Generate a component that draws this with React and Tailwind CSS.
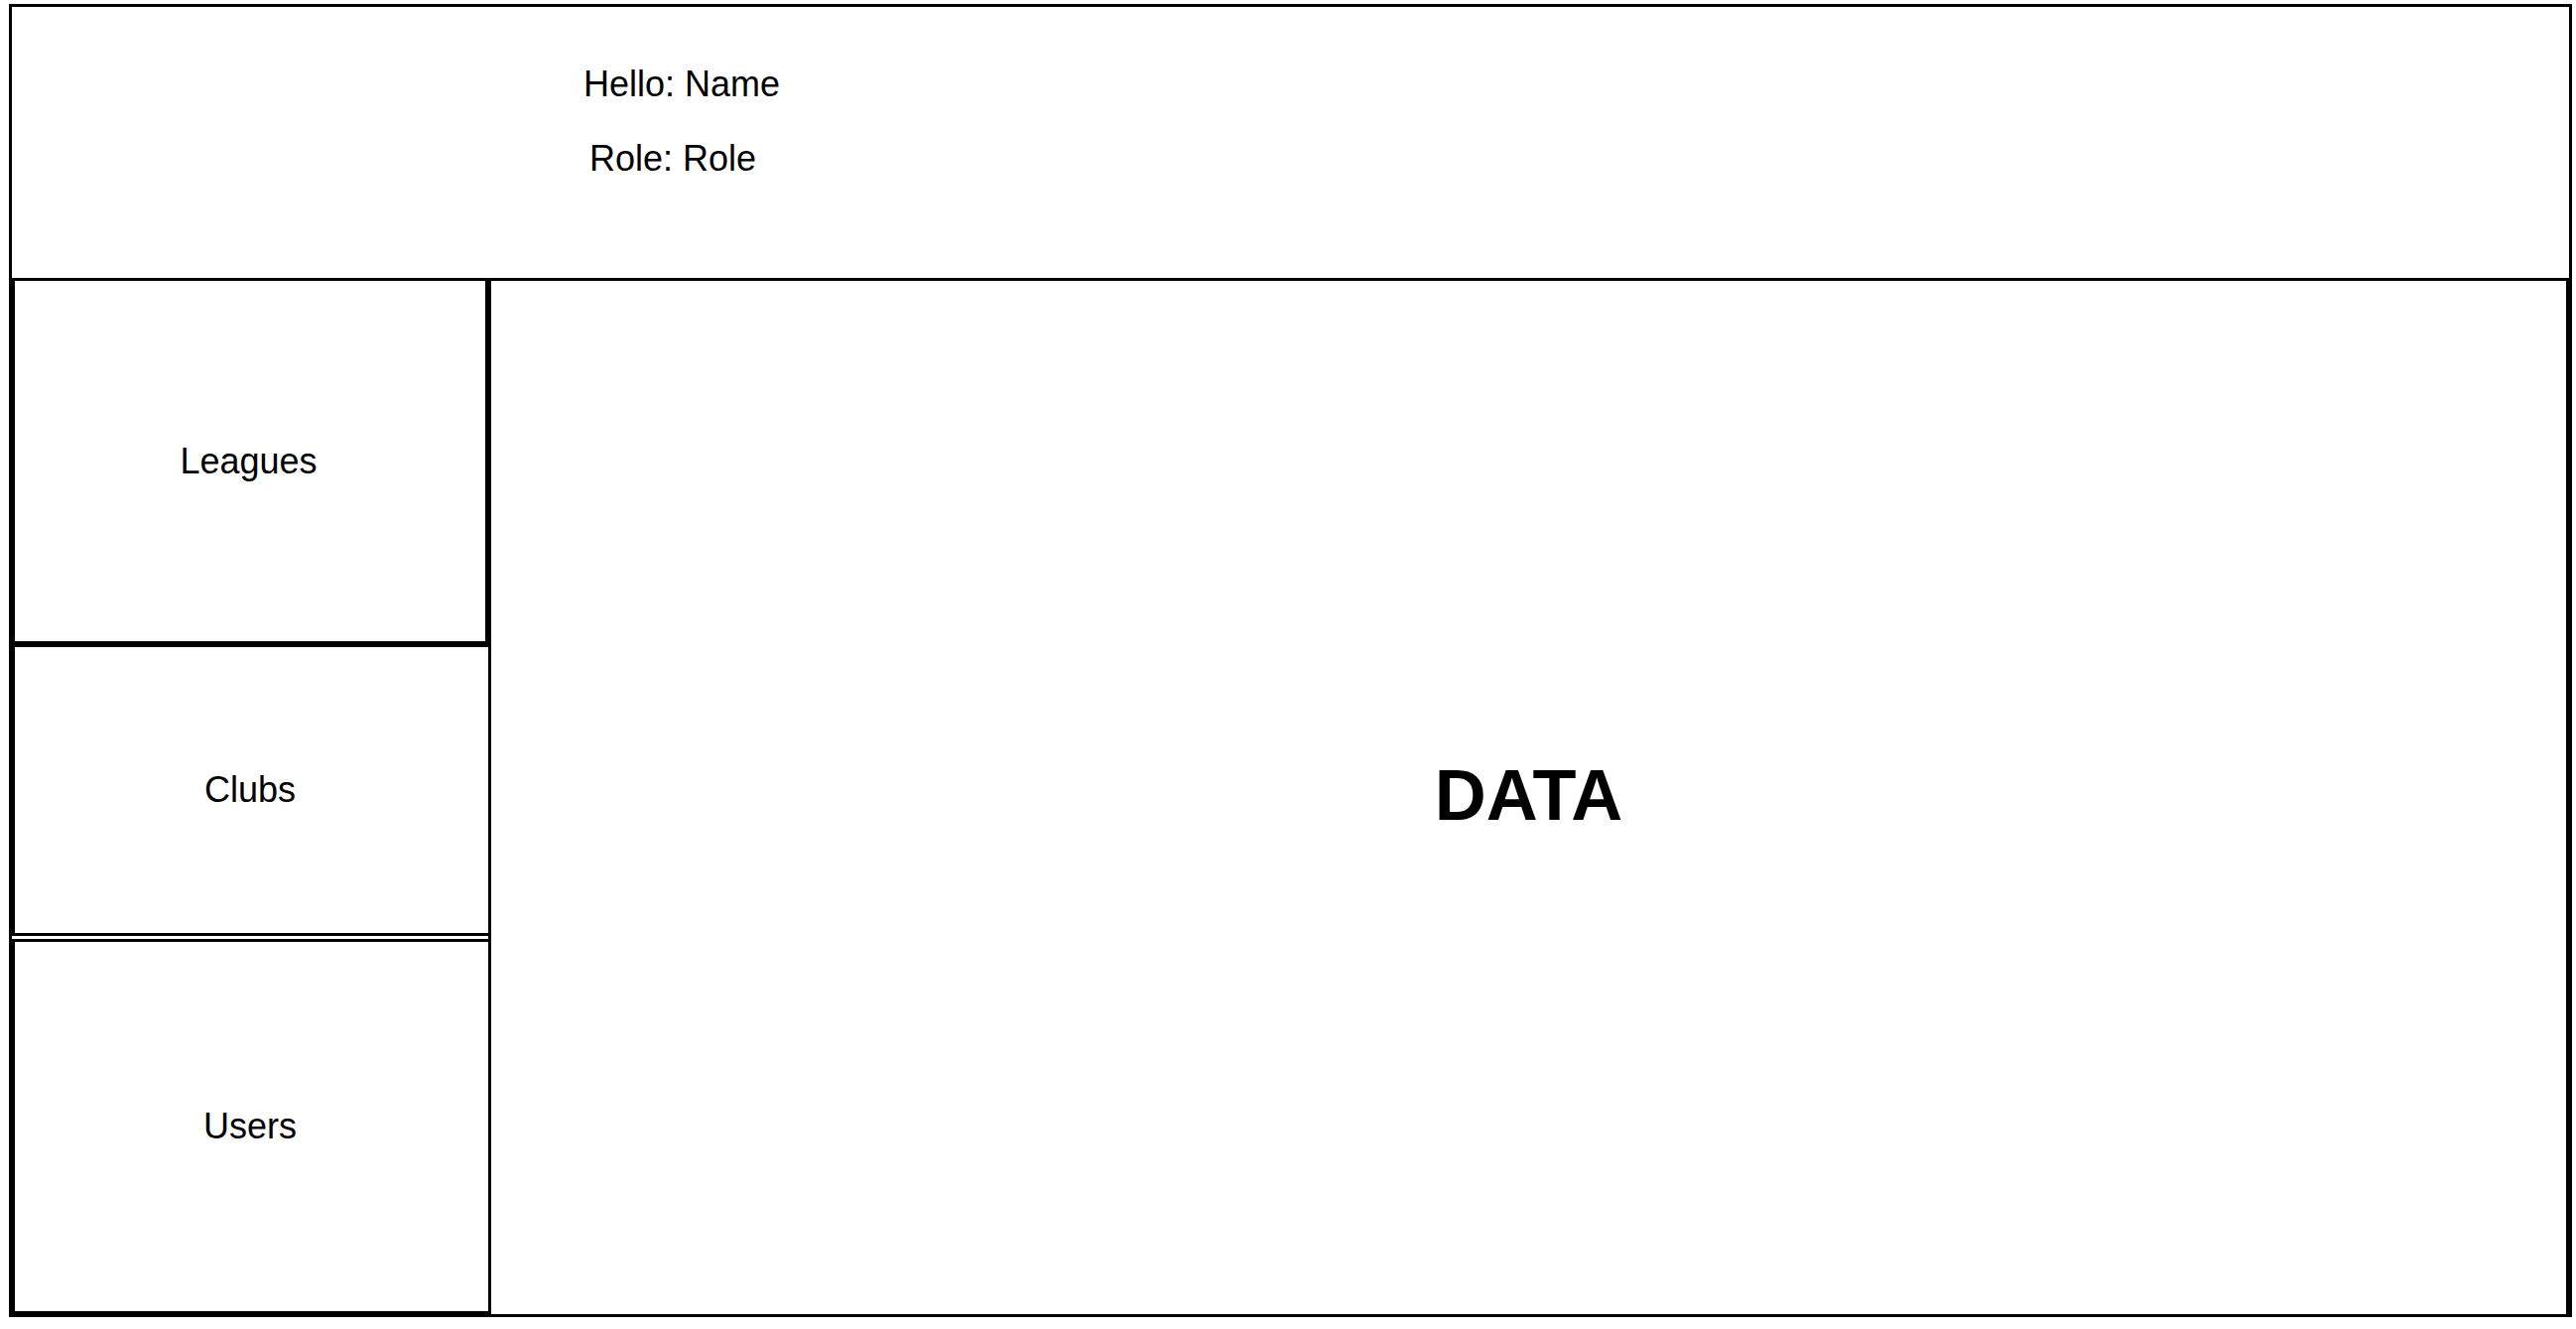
function NavButton({ label, className }) {
  return (
    <button type="button" className={`flex items-center justify-center border-black bg-white pr-[3px] ${className}`}>
      {label}
    </button>
  );
}

export default function App() {
  return (
    <div className="flex min-h-screen flex-col bg-white pt-1 pr-1 pb-3 pl-[9px] font-['Liberation_Sans',Arial,sans-serif] text-[36px] leading-[42px] text-black">
      <div className="flex grow flex-col border-3 border-black">
        <header className="flex min-h-[276px] flex-col gap-[33px] border-b-3 border-black pt-[57px] pl-[576px]">
          <p>Hello: Name</p>
          <p className="pl-1.5">Role: Role</p>
        </header>
        <div className="flex grow">
          <nav aria-label="Sections" className="flex w-[480px] shrink-0 flex-col">
            <NavButton label="Leagues" className="h-[366px] border-x-3 border-b-3" />
            <NavButton label="Clubs" className="h-[294px] border-y-3 border-l-3" />
            <NavButton label="Users" className="mt-[3px] min-h-[294px] grow border-y-3 border-l-3" />
          </nav>
          <main className="flex grow items-center justify-center border-x-3 border-black pb-1.5">
            <h1 className="text-7xl font-bold">DATA</h1>
          </main>
        </div>
      </div>
    </div>
  );
}
